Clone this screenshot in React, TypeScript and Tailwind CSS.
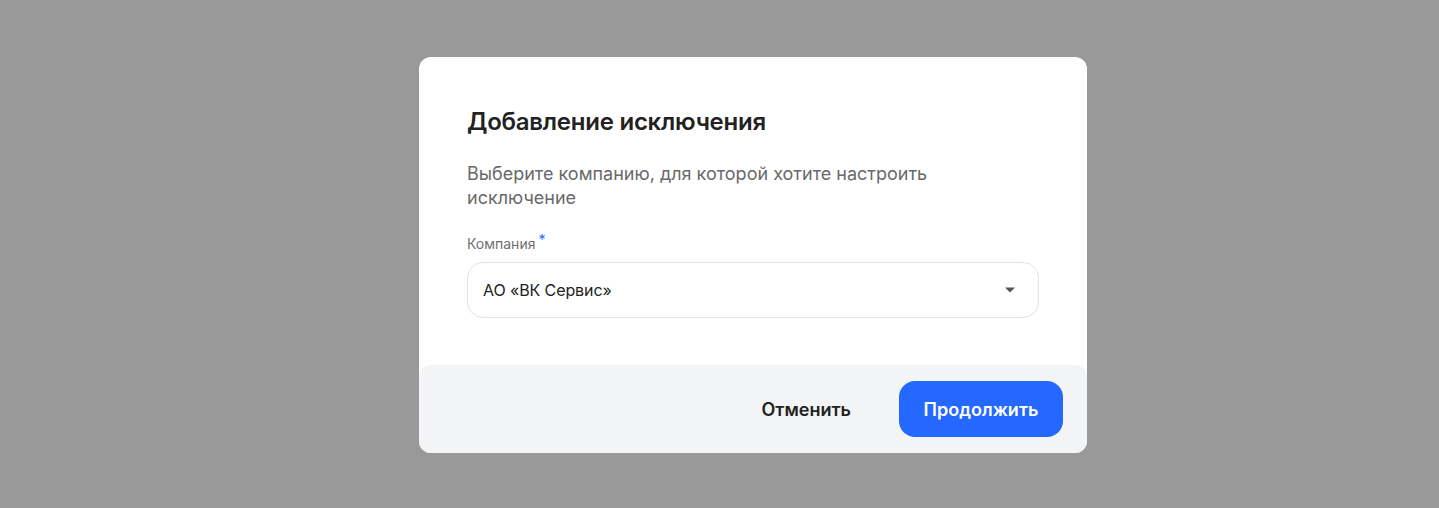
import React from 'react';

const Caret = () => (
  <svg width="12" height="6" viewBox="0 0 12 6" className="text-[#555]">
    <path d="M1 0.5h10L6 5.5z" fill="currentColor" />
  </svg>
);

export default function App() {
  return (
    <div
      className="flex min-h-[508px] w-full items-start justify-center bg-[#999999] pt-[57px] pl-[67px]"
      style={{ fontFamily: 'Inter, "Noto Sans", sans-serif' }}
    >
      <div className="flex w-[668px] flex-col rounded-xl bg-white">
        {/* Body */}
        <div className="px-12 pt-[49px] pb-[47px]">
          <h2 className="text-[24px] leading-[32px] font-semibold tracking-[-0.25px] text-[#222222]">
            Добавление исключения
          </h2>
          <p className="mt-[24px] w-[480px] text-[18px] leading-[24px] text-[#696969]">
            Выберите компанию, для которой хотите настроить исключение
          </p>

          <div className="mt-6">
            <label className="flex items-start text-[14px] leading-[20px] text-[#6f6f6f]">
              Компания
              <span className="ml-[3px] -mt-[4px] text-[14px] text-[#2468ff]">*</span>
            </label>
            <button
              type="button"
              className="mt-2 flex h-14 w-full items-center justify-between rounded-2xl border border-[#e3e4e8] bg-white pr-[22px] pl-[15px] text-left"
            >
              <span className="text-[16px] tracking-[-0.1px] text-[#222222]">АО «ВК Сервис»</span>
              <Caret />
            </button>
          </div>
        </div>

        {/* Footer */}
        <div className="flex items-center justify-end gap-6 rounded-xl bg-[#f3f4f6] p-4 pr-6">
          <button
            type="button"
            className="h-14 rounded-2xl px-6 text-[18px] font-semibold text-[#222222]"
          >
            Отменить
          </button>
          <button
            type="button"
            className="h-14 w-[164px] rounded-2xl bg-[#2468ff] text-[18px] font-semibold text-white"
          >
            Продолжить
          </button>
        </div>
      </div>
    </div>
  );
}
